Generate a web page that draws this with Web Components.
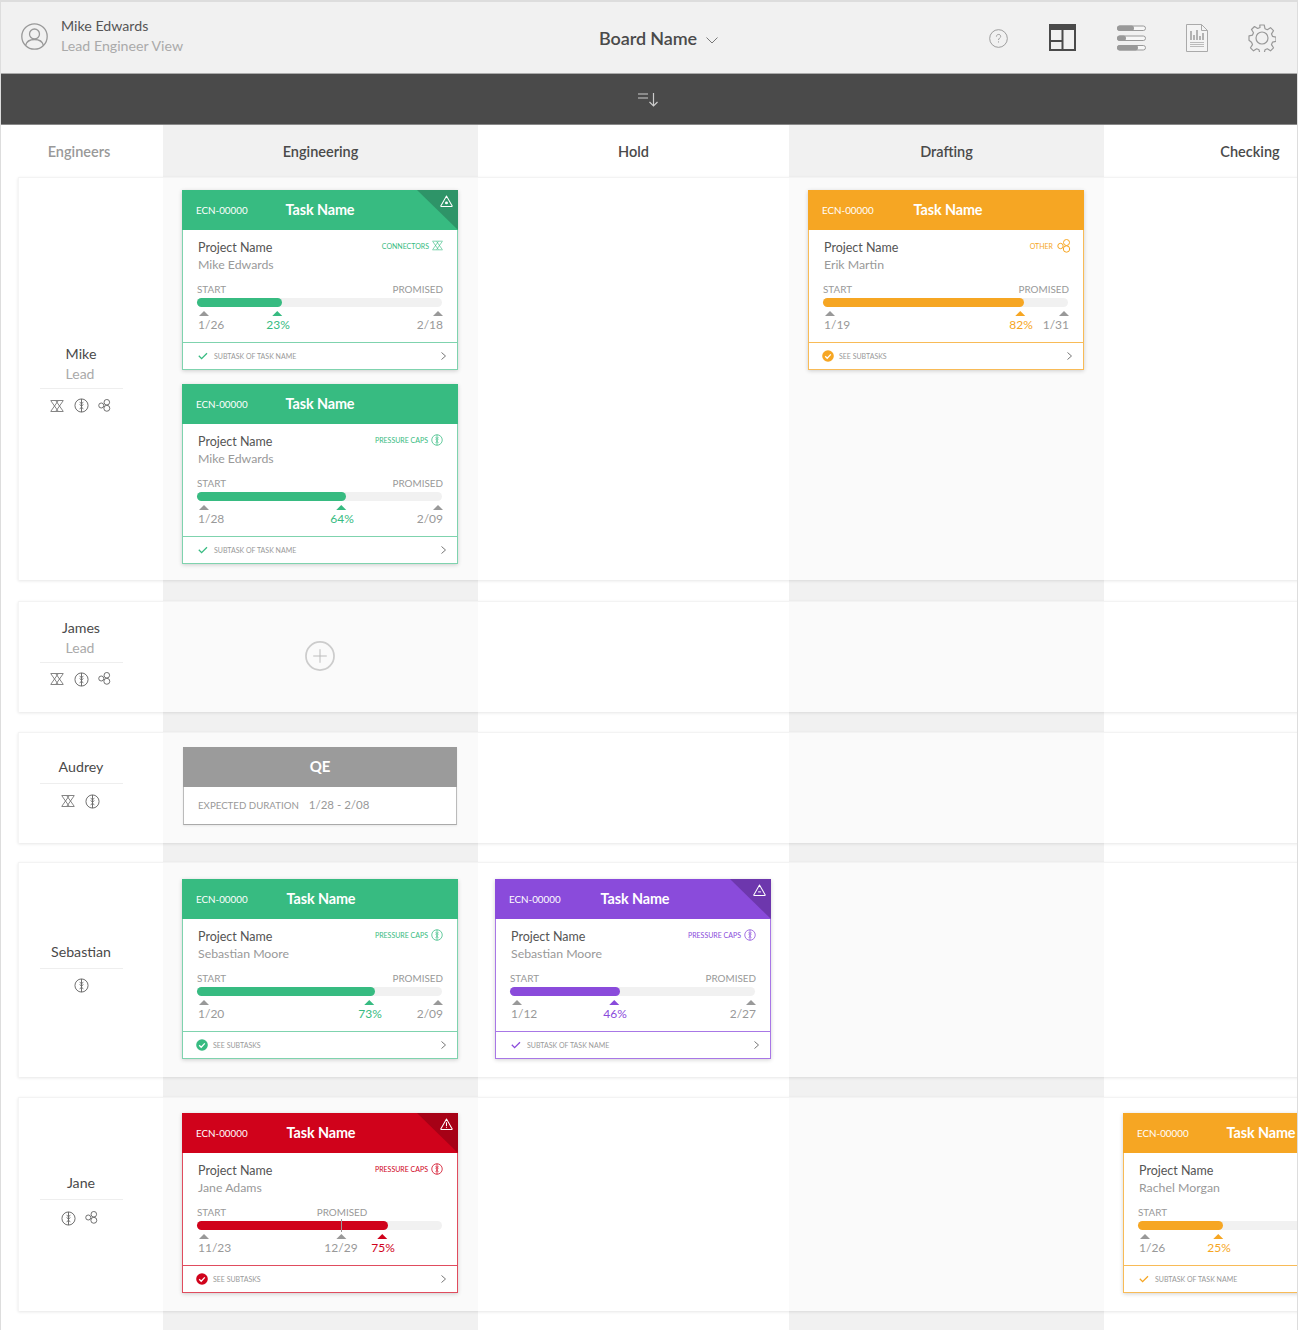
<!DOCTYPE html>
<html>
<head>
<meta charset="utf-8">
<title>Board</title>
<style>
  html, body { margin: 0; height: 1330px; overflow: hidden; background: #fff; }
  body { font-family: Lato, "Open Sans", sans-serif; }
</style>
</head>
<body>
<board-app></board-app>

<script>
'use strict';

const ICONS = {
  connectors: `<svg viewBox="0 0 14 14" fill="none" stroke="currentColor" stroke-width=".8"><path d="M.5 1.500h13M.5 12.500h13M1 2l7 10M6 2l7 10M13 2L6 12M8 2L1 12"/></svg>`,
  caps: `<svg viewBox="0 0 16 16" fill="none" stroke="currentColor" stroke-width="1"><circle cx="8" cy="8" r="7"/><path d="M8 1v14M6 4.500l2 1.500 2-1.500M6 7l2 1.500L10 7M6 11.500l2-1.500 2 1.500"/></svg>`,
  other: `<svg viewBox="0 0 14 14" fill="none" stroke="currentColor" stroke-width="1"><circle cx="3.500" cy="7" r="2.700"/><circle cx="9.500" cy="3.500" r="3"/><circle cx="9.500" cy="10" r="3.200"/></svg>`,
};

const warning = (inner) => `<svg viewBox="0 0 14 13" fill="none" stroke="#fff" stroke-width="1.100" stroke-linejoin="round"><path d="M7 1L13 11.500a.5.500 0 0 1-.4.800H1.400a.5.500 0 0 1-.4-.800z"/>${inner}</svg>`;
const WARNINGS = {
  green: warning('<circle cx="7" cy="8.500" r="1" fill="#fff"/>'),
  purple: warning('<path d="M5.500 8.500h3"/>'),
  red: warning('<path d="M7 4.500v4M7 9.500v1"/>'),
};

class UserBadge extends HTMLElement {
  constructor() {
    super();
    this.attachShadow({ mode: 'open' });
    this.shadowRoot.innerHTML = `
      <style>
        :host { display: flex; align-items: center; gap: 13px; width: 578px; }
        svg { width: 27px; height: 27px; color: #999; flex: none; margin-top: -2px; }
        div { font-size: 14.200px; line-height: 20px; color: #555; margin-top: -3px; }
        span { display: block; color: #aaa; }
      </style>
      <svg viewBox="0 0 27 27" fill="none" stroke="currentColor" stroke-width="1.300">
        <circle cx="13.500" cy="13.500" r="12.700"/>
        <circle cx="13.500" cy="11" r="5"/>
        <path d="M4.500 22.500c1-4 4.500-6 9-6s8 2 9 6"/>
      </svg>
      <div><slot></slot><span><slot name="role"></slot></span></div>`;
  }
}
customElements.define('user-badge', UserBadge);

class BoardHeader extends HTMLElement {
  constructor() {
    super();
    this.attachShadow({ mode: 'open' });
    this.shadowRoot.innerHTML = `
      <style>
        :host { display: flex; align-items: center; height: 71px; padding: 0 21px 0 20px; background: #f1f1f1; border-bottom: 1px solid #aaa; }
        .name { display: flex; align-items: center; gap: 9px; font-size: 18px; font-weight: 600; color: #4a4a4a; letter-spacing: -.1px; margin-top: 1px; }
        .name svg { width: 12px; height: 7px; margin-top: 4px; }
        .tools { margin-left: auto; display: flex; align-items: center; }
        .tools svg { display: block; flex: none; }
      </style>
      <user-badge>Mike Edwards<span slot="role">Lead Engineer View</span></user-badge>
      <div class="name">Board Name
        <svg viewBox="0 0 12 7" fill="none" stroke="#777" stroke-width="1"><path d="M.5.500L6 6l5.500-5.500"/></svg>
      </div>
      <div class="tools">
        <svg style="margin-right:41px;margin-top:1px" width="19" height="19" viewBox="0 0 20 20" fill="none" stroke="#999"><circle cx="10" cy="10" r="9.300"/><path d="M7.800 8c0-3 4.500-3 4.500-.2 0 1.800-2.300 1.800-2.300 3.800M10 13v1.200"/></svg>
        <svg style="margin-right:41px" width="27" height="27" viewBox="0 0 27 27" fill="none"><rect x="1" y="1" width="25" height="25" stroke="#4a4a4a" stroke-width="2"/><path d="M1 1h25v5H1z" fill="#4a4a4a"/><path d="M13.500 6v20M1 17h12.500" stroke="#4a4a4a" stroke-width="2"/></svg>
        <svg style="margin-right:40px" width="29" height="26" viewBox="0 0 29 26"><g fill="#f7f7f7" stroke="#999"><rect x=".5" y="1" width="28" height="4.500" rx="2.200"/><rect x=".5" y="11" width="28" height="4.500" rx="2.200"/><rect x=".5" y="20.500" width="28" height="4.500" rx="2.200"/></g><g fill="#999"><rect x="0" y=".5" width="17" height="5.500" rx="2.700"/><rect x="0" y="10.500" width="9" height="5.500" rx="2.700"/><rect x="0" y="20" width="21" height="5.500" rx="2.700"/></g></svg>
        <svg style="margin-right:40px" width="22" height="28" viewBox="0 0 22 28" fill="none"><path d="M.5.500h15l6 6v21H.5z" fill="#f4f4f4" stroke="#aaa"/><path d="M15.500.500v6h6" stroke="#aaa"/><path d="M5 7v9M8 11v5M11 6v10M14 12v4M17 9v7" stroke="#888" stroke-width="1.200"/><path d="M4 18.500h14M4 20.500h14M4 22.500h14" stroke="#bbb"/></svg>
        <svg width="28" height="28" viewBox="0 0 28 28" fill="none" stroke="#999" stroke-width="1.200" stroke-linejoin="round"><circle cx="14" cy="14" r="6"/><path d="M11.800 1h4.400l.8 3.700 2.300 1 3.200-2 3 3-2 3.200 1 2.400 3.500.8v4.300l-3.500.8-1 2.400 2 3.200-3 3-3.200-2-2.300 1-.8 3.400h-4.400l-.8-3.400-2.300-1-3.200 2-3-3 2-3.200-1-2.400L1 16.200v-4.300l3.500-.8 1-2.400-2-3.200 3-3 3.200 2 2.300-1z"/></svg>
      </div>`;
  }
}
customElements.define('board-header', BoardHeader);

class SortBar extends HTMLElement {
  constructor() {
    super();
    this.attachShadow({ mode: 'open' });
    this.shadowRoot.innerHTML = `
      <style>
        :host { display: flex; align-items: center; justify-content: center; height: 50px; background: #4a4a4a; border-bottom: 1px solid #888; }
        svg { width: 20px; height: 15px; margin-right: 2px; }
      </style>
      <svg viewBox="0 0 20 15" fill="none" stroke="#ccc" stroke-width="1.200"><path d="M0 2h10M0 6h10M15.500 1v13M11.500 10l4 4 4-4"/></svg>`;
  }
}
customElements.define('sort-bar', SortBar);

class ColumnHeads extends HTMLElement {
  constructor() {
    super();
    this.attachShadow({ mode: 'open' });
    this.shadowRoot.innerHTML = `
      <style>
        :host { display: grid; grid-template-columns: 162px 315px 311px 315px 292px; height: 52px; align-items: center; justify-items: center; font-size: 14.500px; font-weight: 600; color: #4a4a4a; }
        .muted { color: #999; margin-right: 6px; }
      </style>
      <div class="muted">Engineers</div><div>Engineering</div><div>Hold</div><div>Drafting</div><div>Checking</div>`;
  }
}
customElements.define('column-heads', ColumnHeads);

class TaskProgress extends HTMLElement {
  connectedCallback() {
    if (this.shadowRoot) return;
    const a = (name) => this.getAttribute(name);
    const late = this.hasAttribute('late');
    const end = a('end');
    this.attachShadow({ mode: 'open' });
    const endMark = !end
      ? ''
      : late
        ? `<div class="mark mid" style="margin-left:144px">${end}</div>`
        : `<div class="mark last">${end}</div>`;
    const promised = !end ? '' : `<div class="${late ? 'mid' : 'right'}">PROMISED</div>`;
    this.shadowRoot.innerHTML = `
      <style>
        :host { display: block; color: #999; }
        .labels { display: grid; font-size: 9.900px; line-height: 12px; height: 12px; }
        .labels div { grid-area: 1 / 1; }
        .labels .right { justify-self: end; }
        .labels .mid { justify-self: start; margin-left: 145px; transform: translateX(-50%); }
        .track { height: 9px; margin: 3px 1px 0 0; border-radius: 5px; background: #f1f1f1; display: flex; }
        .fill { border-radius: 5px; background: var(--accent); }
        .tick { width: 1px; height: 13px; background: #999; margin: -2px 0 0 144px; position: absolute; }
        .marks { display: grid; height: 28px; margin-top: 4px; font-size: 12px; line-height: 15px; }
        .mark { grid-area: 1 / 1; justify-self: start; text-align: center; }
        .mark::before { content: ''; display: block; width: 0; height: 0; margin: 0 auto 1px; border: solid transparent; border-width: 0 5px 5px; border-bottom-color: #999; }
        .mark.first { text-align: left; padding-left: 1px; }
        .mark.first::before { margin-left: 1px; }
        .mark.last { justify-self: end; text-align: right; }
        .mark.last::before { margin: 0 0 1px auto; }
        .mark.mid, .mark.pct { transform: translateX(-50%); }
        .mark.pct { color: var(--accent); }
        .mark.pct span { display: block; margin-top: 1px; transform: translateX(1px); }
        .mark.pct::before { border-bottom-color: var(--accent); }
      </style>
      <div class="labels">
        <div>START</div>
        ${promised}
      </div>
      <div class="track"><div class="fill" style="width:${a('fill')}px"></div>${late ? '<div class="tick"></div>' : ''}</div>
      <div class="marks">
        <div class="mark first">${a('start')}</div>
        ${endMark}
        <div class="mark pct" style="margin-left:${a('at')}px"><span>${a('pct')}</span></div>
      </div>`;
  }
}
customElements.define('task-progress', TaskProgress);

class TaskCard extends HTMLElement {
  connectedCallback() {
    if (this.shadowRoot) return;
    const a = (name) => this.getAttribute(name);
    const tone = a('tone');
    const tag = a('tag');
    const icon = { 'CONNECTORS': 'connectors', 'PRESSURE CAPS': 'caps', 'OTHER': 'other' }[tag];
    const done = this.hasAttribute('done');
    const foot = done ? 'SEE SUBTASKS' : 'SUBTASK OF TASK NAME';
    const check = done
      ? `<svg class="done" viewBox="0 0 12 12"><circle cx="6" cy="6" r="5.800" fill="currentColor"/><path d="M3.200 6.200l2 2 3.600-3.800" fill="none" stroke="#fff" stroke-width="1.300"/></svg>`
      : `<svg class="todo" viewBox="0 0 10 8" fill="none" stroke="currentColor" stroke-width="1.300"><path d="M.8 3.800l2.800 2.800L9 1.200"/></svg>`;
    const end = a('end') || '';
    this.attachShadow({ mode: 'open' });
    this.shadowRoot.innerHTML = `
      <style>
        :host { display: block; width: 276px; height: 180px; box-sizing: border-box; background: #fff; border: 1px solid var(--soft); box-shadow: 0 1px 4px rgba(0,0,0,.18); color: #999; }
        :host([tone=green]) { --accent: #37bb81; --deep: #2e9468; --soft: #7fd3ae; }
        :host([tone=orange]) { --accent: #f6a623; --deep: #f6a623; --soft: #f8bb57; }
        :host([tone=purple]) { --accent: #8a4bdb; --deep: #6d37ad; --soft: #a877e6; }
        :host([tone=red]) { --accent: #d0021b; --deep: #a60116; --soft: #e04c5e; }
        header { position: relative; height: 40px; margin: -1px -1px 0; background: var(--accent); color: #fff; display: grid; grid-template-columns: 1fr auto 1fr; align-items: center; padding: 0 14px; overflow: hidden; }
        .ecn { font-size: 9.800px; }
        .title { font-size: 14.400px; font-weight: 700; letter-spacing: -.1px; transform: translate(var(--title-shift, 0), -1px); }
        .fold { position: absolute; top: 0; right: 0; width: 41px; height: 40px; background: var(--deep); clip-path: polygon(0 0, 100% 0, 100% 100%); }
        .warn { position: absolute; top: 5px; right: 5px; width: 13px; height: 12px; display: block; }
        .warn svg { display: block; }
        .body { padding: 0 14px; height: 112px; box-sizing: border-box; }
        .top { display: grid; grid-template-columns: 1fr auto; grid-template-rows: auto auto; align-content: start; padding-top: 9px; height: 50px; box-sizing: border-box; }
        .project { font-size: 12.500px; line-height: 17px; color: #555; padding-left: 1px; }
        .owner { font-size: 12.300px; line-height: 18px; padding-left: 1px; grid-column: 1 / -1; }
        .tag { display: flex; align-items: center; gap: 3px; height: 17px; margin-top: -2px; font-size: 7px; color: var(--accent); }
        .tag svg { width: 11px; height: 11px; flex: none; }
        .tag svg.caps { width: 12px; height: 12px; }
        .tag svg.other { width: 14px; height: 14px; margin: 0 -2px 0 1px; }
        task-progress { margin-top: 3px; }
        footer { display: flex; align-items: center; height: 26px; padding: 0 11px 0 14px; border-top: 1px solid var(--soft); color: var(--accent); }
        footer span { font-size: 7px; color: #999; margin-left: 6px; }
        footer .done { width: 12px; height: 12px; margin: 0 -1px; flex: none; }
        footer .todo { width: 10px; height: 8px; margin: 0 0 0 1px; flex: none; }
        footer .go { width: 5px; height: 8px; margin-left: auto; color: #777; }
      </style>
      <header>
        <div class="ecn">ECN-00000</div>
        <div class="title">Task Name</div>
        ${this.hasAttribute('alert') ? `<div class="fold"></div><span class="warn">${WARNINGS[tone]}</span>` : ''}
      </header>
      <div class="body">
        <div class="top">
          <div class="project">Project Name</div>
          <div class="tag">${tag ? tag + ICONS[icon].replace('<svg', `<svg class="${icon}"`) : ''}</div>
          <div class="owner">${a('owner')}</div>
        </div>
        <task-progress fill="${a('fill')}" at="${a('at')}" start="${a('start')}" end="${end}" pct="${a('pct')}" ${this.hasAttribute('late') ? 'late' : ''}></task-progress>
      </div>
      <footer>
        ${check}
        <span>${foot}</span>
        <svg class="go" viewBox="0 0 5 8" fill="none" stroke="currentColor"><path d="M.5.500L4.500 4 .5 7.500"/></svg>
      </footer>`;
  }
}
customElements.define('task-card', TaskCard);

class DurationCard extends HTMLElement {
  constructor() {
    super();
    this.attachShadow({ mode: 'open' });
    this.shadowRoot.innerHTML = `
      <style>
        :host { display: block; width: 274px; height: 78px; margin-left: 1px; box-sizing: border-box; background: #fff; border: 1px solid #bbb; border-top: 0; border-bottom-color: #aaa; box-shadow: 0 1px 2px rgba(0,0,0,.08); }
        header { height: 38px; padding-bottom: 2px; margin: 0 -1px; background: #9b9b9b; color: #fff; font-size: 15px; font-weight: 700; display: flex; align-items: center; justify-content: center; }
        div { display: flex; align-items: center; height: 35px; padding-left: 14px; color: #999; }
        small { font-size: 9.700px; margin-right: 10px; }
        span { font-size: 11.500px; }
      </style>
      <header>QE</header>
      <div><small>EXPECTED DURATION</small><span>1/28 - 2/08</span></div>`;
  }
}
customElements.define('duration-card', DurationCard);

class AddButton extends HTMLElement {
  constructor() {
    super();
    this.attachShadow({ mode: 'open' });
    this.shadowRoot.innerHTML = `
      <style>
        :host { display: block; width: 30px; height: 30px; margin: 39px 0 0 123px; }
        svg { display: block; }
      </style>
      <svg width="30" height="30" viewBox="0 0 31 31" fill="none" stroke="#ccc"><circle cx="15.500" cy="15.500" r="14.500" stroke-width="1.800"/><path d="M15.500 8.500v14M8.500 15.500h14" stroke="#bbb"/></svg>`;
  }
}
customElements.define('add-button', AddButton);

class EngineerCell extends HTMLElement {
  connectedCallback() {
    if (this.shadowRoot) return;
    const role = this.getAttribute('role-name');
    const kinds = this.getAttribute('skills').split(' ');
    this.attachShadow({ mode: 'open' });
    this.shadowRoot.innerHTML = `
      <style>
        :host { display: flex; flex-direction: column; align-items: center; justify-content: center; padding-right: 20px; color: #4a4a4a; font-size: 14.200px; line-height: 20px; }
        .who { width: 83px; text-align: center; padding-bottom: 6px; border-bottom: 1px solid #eee; }
        .who.has-role { padding-bottom: 4px; }
        .role { color: #aaa; font-size: 14px; transform: translateX(-1px); }
        .skills { display: flex; align-items: center; gap: 10px; height: 32px; color: #666; margin-right: var(--skills-left, 2px); transform: translateY(var(--skills-down, 0)); }
        svg { display: block; flex: none; }
        .connectors { width: 14px; height: 14px; }
        .caps { width: 15px; height: 15px; }
        .other { width: 13px; height: 13px; margin-left: -1px; margin-top: -1px; }
      </style>
      <div class="who ${role ? 'has-role' : ''}">${this.getAttribute('name')}${role ? `<div class="role">${role}</div>` : ''}</div>
      <div class="skills">${kinds.map((k) => ICONS[k].replace('<svg', `<svg class="${k}"`)).join('')}</div>`;
  }
}
customElements.define('engineer-cell', EngineerCell);

class LaneCell extends HTMLElement {
  constructor() {
    super();
    this.attachShadow({ mode: 'open' });
    this.shadowRoot.innerHTML = `
      <style>
        :host { display: flex; flex-direction: column; gap: 14px; padding: var(--lane-top, 16px) 0 0 19px; min-width: 0; }
        :host([narrow]) { padding-left: 17px; }
      </style>
      <slot></slot>`;
  }
}
customElements.define('lane-cell', LaneCell);

class SwimRow extends HTMLElement {
  constructor() {
    super();
    this.attachShadow({ mode: 'open' });
    this.shadowRoot.innerHTML = `
      <style>
        :host { display: grid; grid-template-columns: 144px 315px 311px 315px 1fr; margin-left: 17px; box-sizing: border-box; border-top: 1px solid #f3f3f3; border-left: 1px solid #f5f5f5; background: linear-gradient(to right, #fff 144px, rgba(255,255,255,.68) 144px); box-shadow: 0 1px 3px rgba(0,0,0,.1); width: 1400px; }
      </style>
      <slot></slot>`;
  }
}
customElements.define('swim-row', SwimRow);

class BoardApp extends HTMLElement {
  constructor() {
    super();
    this.attachShadow({ mode: 'open' });
    this.shadowRoot.innerHTML = `
      <style>
        :host { display: block; width: 1298px; height: 1330px; box-sizing: border-box; overflow: hidden; border: solid #ddd; border-width: 2px 1px 0; font-family: Lato, "Open Sans", sans-serif; }
        .board { height: 1205px; background: linear-gradient(to right, #fff 162px, #f1f1f1 162px 477px, #fff 477px 788px, #f1f1f1 788px 1103px, #fff 1103px); }
      </style>
      <board-header></board-header>
      <sort-bar></sort-bar>
      <div class="board">
        <column-heads></column-heads>

        <swim-row style="height:403px;--lane-top:12px">
          <engineer-cell style="padding-top:6px;--skills-down:1px" name="Mike" role-name="Lead" skills="connectors caps other"></engineer-cell>
          <lane-cell>
            <task-card tone="green" alert tag="CONNECTORS" owner="Mike Edwards" fill="85" at="80" start="1/26" end="2/18" pct="23%"></task-card>
            <task-card tone="green" tag="PRESSURE CAPS" owner="Mike Edwards" fill="149" at="144" start="1/28" end="2/09" pct="64%"></task-card>
          </lane-cell>
          <lane-cell narrow></lane-cell>
          <lane-cell>
            <task-card style="--title-shift:2px" tone="orange" tag="OTHER" owner="Erik Martin" fill="201" at="197" start="1/19" end="1/31" pct="82%" done></task-card>
          </lane-cell>
          <lane-cell></lane-cell>
        </swim-row>

        <swim-row style="height:111px;margin-top:21px">
          <engineer-cell style="padding-bottom:1px" name="James" role-name="Lead" skills="connectors caps other"></engineer-cell>
          <lane-cell style="--lane-top:0px"><add-button></add-button></lane-cell>
          <lane-cell narrow></lane-cell><lane-cell></lane-cell><lane-cell></lane-cell>
        </swim-row>

        <swim-row style="height:111px;margin-top:20px;--lane-top:14px">
          <engineer-cell style="padding-bottom:3px;--skills-down:1px" name="Audrey" skills="connectors caps"></engineer-cell>
          <lane-cell><duration-card></duration-card></lane-cell>
          <lane-cell narrow></lane-cell><lane-cell></lane-cell><lane-cell></lane-cell>
        </swim-row>

        <swim-row style="height:215px;margin-top:19px;--lane-top:16px">
          <engineer-cell style="padding-top:3px;--skills-left:0px" name="Sebastian" skills="caps"></engineer-cell>
          <lane-cell>
            <task-card style="--title-shift:1px" tone="green" tag="PRESSURE CAPS" owner="Sebastian Moore" fill="178" at="172" start="1/20" end="2/09" pct="73%" done></task-card>
          </lane-cell>
          <lane-cell narrow>
            <task-card style="--title-shift:2px" tone="purple" alert tag="PRESSURE CAPS" owner="Sebastian Moore" fill="110" at="104" start="1/12" end="2/27" pct="46%"></task-card>
          </lane-cell>
          <lane-cell></lane-cell><lane-cell></lane-cell>
        </swim-row>

        <swim-row style="height:214px;margin-top:20px;--lane-top:15px">
          <engineer-cell style="padding-bottom:4px;--skills-left:4px;--skills-down:2px" name="Jane" skills="caps other"></engineer-cell>
          <lane-cell>
            <task-card style="--title-shift:1px" tone="red" alert late tag="PRESSURE CAPS" owner="Jane Adams" fill="191" at="185" start="11/23" end="12/29" pct="75%" done></task-card>
          </lane-cell>
          <lane-cell narrow></lane-cell>
          <lane-cell></lane-cell>
          <lane-cell>
            <task-card tone="orange" owner="Rachel Morgan" fill="85" at="80" start="1/26" pct="25%"></task-card>
          </lane-cell>
        </swim-row>
      </div>`;
  }
}
customElements.define('board-app', BoardApp);
</script>
</body>
</html>
